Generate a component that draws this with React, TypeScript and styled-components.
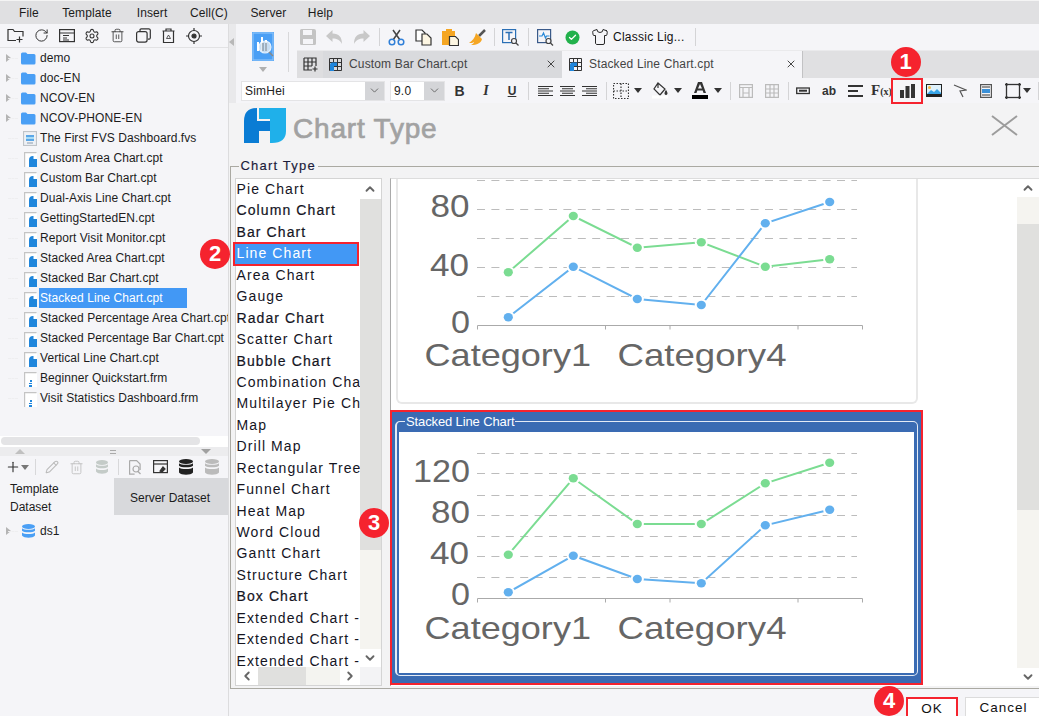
import React from "react";
import styled, { createGlobalStyle } from "styled-components";
import { ChevronUp, ChevronDown, ChevronLeft, ChevronRight, X, RotateCw, Settings, Trash2, Pencil, Plus, Shirt, Check } from "lucide-react";

const Global = createGlobalStyle`
  html, body { margin: 0; padding: 0; background: #f5f5f8; }
  * { box-sizing: border-box; }
`;

const Page = styled.div`
  width: 1039px; height: 716px; position: relative; overflow: hidden;
  display: flex; flex-direction: column;
  font-family: "Liberation Sans", Arial, sans-serif; font-size: 12px; color: #1c1c1c;
  background: #f5f5f8;
`;
const MenuBar = styled.div`
  height: 24px; flex: none; background: #e0e0e2; border-top: 1px solid #f4f4f4;
  display: flex; align-items: center; padding: 0 0 0 19px; letter-spacing: .1px;
`;
const MenuItem = styled.span<{ $after: number }>`margin-right: ${p => p.$after}px;`;
const Body = styled.div`flex: 1; min-height: 0; display: flex;`;

/* Sidebar */
const Sidebar = styled.aside`
  width: 229px; flex: none; display: flex; flex-direction: column;
  border-right: 1px solid #dcdcde; background: #f5f5f8;
`;
const SideTools = styled.div`
  height: 24px; flex: none; display: flex; align-items: center; padding-left: 3px;
  border-bottom: 1px solid #e2e2e4; color: #333;
`;
const SideTool = styled.span<{ $w?: number }>`
  width: ${p => p.$w ?? 25.5}px; flex: none; display: flex; align-items: center; justify-content: center;
`;
const Tree = styled.div`flex: 1; min-height: 0; overflow: hidden; position: relative; letter-spacing: .06px;`;
const TreeRow = styled.div`height: 20px; display: flex; align-items: center; white-space: nowrap; position: relative;`;
const Twisty = styled.span`
  width: 21px; flex: none; height: 20px; position: relative;
  &::after { content: ""; position: absolute; left: 8px; right: 3px; top: 10px; border-top: 1px dashed #eeeef0; }
`;
const Arrow = styled.i`
  position: absolute; left: 6px; top: 6px; width: 0; height: 0;
  border-left: 5px solid #b4b4b4; border-top: 4px solid transparent; border-bottom: 4px solid transparent;
`;
const TreeIcon = styled.span`
  width: 19px; flex: none; display: flex; height: 20px; align-items: center;
`;
const TreeLabel = styled.span<{ $on?: boolean }>`
  height: 20px; line-height: 20px; padding-left: 1px; margin-left: -1px;
  width: ${p => (p.$on ? "148px" : "auto")};
  background: ${p => (p.$on ? "#4298f5" : "transparent")};
  color: ${p => (p.$on ? "#fff" : "#1c1c1c")};
`;
const ScrollBand = styled.div`height: 11px; flex: none; background: #fff; padding: 1px 28px 2px 1px; display: flex;`;
const ScrollPill = styled.div`flex: 1; background: #e4e4e6; border-radius: 4px;`;
const Splitter = styled.div`
  height: 9px; flex: none; background: #ececee; display: flex; align-items: center; justify-content: space-between;
  padding: 0 17px 0 15px;
`;
const SplitUp = styled.i`width: 0; height: 0; border: 5px solid transparent; border-top: 0; border-bottom: 5px solid #c0c0c0;`;
const SplitDown = styled.i`width: 0; height: 0; border: 5px solid transparent; border-bottom: 0; border-top: 5px solid #a0a0a0;`;
const SplitGrip = styled.i`width: 6px; height: 4px; border-top: 1px solid #aaa; border-bottom: 1px solid #aaa;`;
const DataTools = styled.div`height: 22px; flex: none; display: flex; align-items: center; padding-left: 5px;`;
const SideSep = styled.i<{ $l: number; $r: number }>`
  width: 1px; height: 16px; background: #d8d8da; margin: 0 ${p => p.$r}px 0 ${p => p.$l}px; flex: none;
`;
const DataTabs = styled.div`height: 37px; flex: none; display: flex;`;
const DataTab = styled.div<{ $on?: boolean }>`
  width: 114px; display: flex; align-items: center; line-height: 18px; padding-top: 3px;
  padding-left: ${p => (p.$on ? "10px" : "16px")};
  background: ${p => (p.$on ? "#f5f5f8" : "#d8d9dc")};
`;
const DataTree = styled.div`height: 201px; flex: none; padding-top: 6px;`;

/* Right */
const Main = styled.main`flex: 1; min-width: 0; display: flex; flex-direction: column;`;
const Header = styled.header`height: 79px; flex: none; display: flex; position: relative; z-index: 1;`;
const Strip = styled.div`
  width: 7px; flex: none; background: #e9e9eb; display: flex; padding-top: 14px; align-items: flex-start;
  &::before { content: ""; border: 4px solid transparent; border-left: 0; border-right: 5px solid #b8b8b8; }
`;
const HeadCol = styled.div`flex: 1; min-width: 0; display: flex; flex-direction: column;`;
const HeadTop = styled.div`height: 54px; flex: none; display: flex;`;
const Rail = styled.div`
  width: 52px; flex: none; display: flex; flex-direction: column; align-items: center; padding-top: 8px; padding-left: 2px;
`;
const RailCaret = styled.i`
  margin-top: 6px; width: 0; height: 0; border: 4px solid transparent; border-bottom: 0; border-top: 5px solid #b0b0b0;
`;
const RailSep = styled.i`width: 1px; height: 40px; margin: 8px 8px 0 0; background: #d8d8da; flex: none;`;
const TopCol = styled.div`flex: 1; min-width: 0; display: flex; flex-direction: column;`;
const TopTools = styled.div`height: 26px; flex: none; display: flex; align-items: center; margin-left: -2px;`;
const ToolBtn = styled.span<{ $w?: number }>`
  width: ${p => p.$w ?? 26}px; height: 24px; flex: none; display: flex; align-items: center; justify-content: center;
  position: relative;
`;
const Sep = styled.i<{ $l: number; $r: number }>`
  width: 1px; height: 18px; flex: none; background: #d4d4d6; margin: 0 ${p => p.$r}px 0 ${p => p.$l}px;
`;
const ThemeLabel = styled.span`letter-spacing: .25px; white-space: nowrap; color: #111;`;
const TabRow = styled.div`height: 28px; flex: none; display: flex; background: #e0e0e2; border-top: 1px solid #eaeaec;`;
const NewTab = styled.div`width: 26px; flex: none; display: flex; align-items: center; justify-content: center; background: #dedee0;`;
const DocTab = styled.div<{ $on?: boolean }>`
  width: 240px; flex: none; display: flex; align-items: center; padding: 0 0 1px 6px; gap: 7px;
  background: ${p => (p.$on ? "#f5f5f8" : "#d9dadd")}; letter-spacing: .15px; color: #444;
  border-right: ${p => (p.$on ? "1px solid #c2c2c4" : "1px solid #f5f5f8")};
`;
const TabClose = styled.span`margin-left: auto; margin-right: 5px; display: flex; color: #333;`;
const FormatRow = styled.div`height: 25px; flex: none; display: flex; align-items: center; padding-left: 5px;`;
const Select = styled.div<{ $w: number; $btn: number }>`
  width: ${p => p.$w}px; height: 20px; flex: none; display: flex; background: #fff; border: 1px solid #e4e4e6;
  margin-right: ${p => (p.$w > 100 ? 5 : 1)}px; color: #222;
  & > span { flex: 1; padding-left: 3px; line-height: 18px; letter-spacing: .2px; }
  & > b { width: ${p => p.$btn}px; flex: none; background: #d4d5d8; display: flex; align-items: center; justify-content: center; color: #555; font-weight: 400; }
`;
const Glyph = styled.span<{ $serif?: boolean; $i?: boolean; $u?: boolean; $b?: boolean; $size?: number }>`
  font-family: ${p => (p.$serif ? '"Liberation Serif", serif' : '"Liberation Sans", sans-serif')};
  font-size: ${p => p.$size ?? 14}px;
  font-style: ${p => (p.$i ? "italic" : "normal")};
  font-weight: ${p => (p.$b ? 700 : 400)};
  text-decoration: ${p => (p.$u ? "underline" : "none")};
  color: #333;
`;
const SmallX = styled.span`font-size: 10px;`;
const Drop = styled.span<{ $gap: number; $mr: number; $ml?: number }>`
  display: flex; align-items: center; gap: ${p => p.$gap}px; flex: none;
  margin: 0 ${p => p.$mr}px 0 ${p => p.$ml ?? 0}px;
`;
const Caret = styled.i<{ $soft?: boolean }>`
  width: 0; height: 0; flex: none; border: 4px solid transparent; border-bottom: 0;
  border-top: 5px solid ${p => (p.$soft ? "#777" : "#333")};
`;
const Marked = styled(ToolBtn)`
  &::after { content: ""; position: absolute; left: -3px; right: -3px; top: -1px; bottom: -1px; border: 2px solid #f5232e; }
`;
const OverlayCheck = styled.span`position: absolute; display: flex; color: #fff;`;
const DbOffset = styled.span`margin-left: 1px; display: flex;`;

/* Dialog */
const Dialog = styled.section`flex: 1; min-height: 0; display: flex; flex-direction: column; background: #f3f3f4;`;
const DialogHead = styled.div`
  height: 55px; flex: none; display: flex; align-items: flex-start; padding: 5px 21px 0 15px;
`;
const DialogTitle = styled.h1`
  margin: 4px 0 0 7px; font-size: 28px; line-height: 34px; font-weight: 400; color: #a2a2a2; letter-spacing: .8px;
  -webkit-text-stroke: .7px #a2a2a2;
`;
const DialogClose = styled.span`margin: 7px 0 0 auto; display: flex;`;
const TypeField = styled.fieldset`
  margin: 0 0 0 1px; padding: 4px 0 0 3.5px; height: 531px; flex: none; display: flex; gap: 8.5px;
  border: 1px solid #aaa9a2; border-right: 0; min-width: 0;
`;
const TypeLegend = styled.legend`
  margin-left: 4px; padding: 0 2px; font-size: 13px; line-height: 16px; letter-spacing: 1.2px; color: #1b1b3a;
  -webkit-text-stroke: .15px #1b1b3a;
`;
const ListBox = styled.div`
  width: 147px; height: 508px; flex: none; border: 1px solid #d4d4d4; background: #fff;
  display: grid; grid-template-columns: 124px 21px; grid-template-rows: minmax(0, 1fr) 18px;
`;
const Rows = styled.div`min-height: 0;`;
const TypeRow = styled.div<{ $on?: boolean; $heavy?: boolean }>`
  height: 21.45px; line-height: 21.45px; white-space: nowrap; overflow: hidden;
  font-size: 14px; letter-spacing: 1.1px; padding-left: ${p => (p.$on ? "3px" : "1px")};
  margin: ${p => (p.$on ? "0 2px 0 -2px" : "0")};
  color: ${p => (p.$on ? "#fff" : "#15151f")};
  background: ${p => (p.$on ? "#4298f5" : "transparent")};
  outline: ${p => (p.$on ? "2px solid #f5232e" : "none")}; outline-offset: -1px;
  position: relative; z-index: ${p => (p.$on ? 2 : 0)};
  -webkit-text-stroke: ${p => (p.$heavy ? ".2px #15151f" : "0")};
`;
const VBar = styled.div`display: flex; flex-direction: column; background: #f5f4f0; position: relative; z-index: 1;`;
const HBar = styled.div`display: flex; background: #f4f4f0; position: relative; z-index: 1;`;
const Corner = styled.div`background: #f3f3f5;`;
const ScrollBtn = styled.span<{ $h?: number; $w?: number }>`
  flex: none; background: #fff; display: flex; align-items: center; justify-content: center; color: #666;
  height: ${p => (p.$h ? `${p.$h}px` : "auto")}; width: ${p => (p.$w ? `${p.$w}px` : "auto")};
`;
const Thumb = styled.div<{ $len: number; $horizontal?: boolean }>`
  flex: none; background: #e0e0de;
  ${p => (p.$horizontal ? `width: ${p.$len}px;` : `height: ${p.$len}px;`)}
`;
const Flex1 = styled.div`flex: 1;`;
const TrackGap = styled.div`flex: 0 0 27px;`;
const Pane = styled.div`
  flex: 1; min-width: 0; height: 508px; display: flex; border-left: 1px solid #aaa; border-top: 1px solid #ddd; background: #fff;
`;
const Cards = styled.div`flex: 1; min-width: 0; display: flex; flex-direction: column;`;
const PlainCard = styled.div`
  width: 522px; height: 225px; flex: none; margin-left: 5px; border: 2px solid #e8e8e8; border-top: 0; border-radius: 0 0 6px 6px;
`;
const SelectedCard = styled.div`
  width: 533px; height: 275px; flex: none; margin: 6px 0 0 -1px; padding: 2px 3px 0; position: relative;
  border: 2px solid #f5232e; background: #3a6bb3;
`;
const InnerField = styled.fieldset`
  margin: 0; padding: 3px 3px 2px 2px; min-width: 0; border-style: solid; border-color: #e4ebf5; border-width: 1px 1px 1px 2px; border-radius: 5px;
`;
const InnerLegend = styled.legend`
  margin-left: 6px; padding: 0 1px; font-size: 13px; line-height: 15px; letter-spacing: -.12px; color: #fff;
`;
const InnerPanel = styled.div`height: 241px; background: #fff;`;
const ChartSvg = styled.svg`display: block;`;
const AxisText = styled.text`font-family: "Liberation Sans", Arial, sans-serif; font-size: 32px; fill: #666;`;
const PaneBar = styled.div`
  width: 22px; flex: none; margin-left: 1px; display: flex; flex-direction: column; background: #f5f4f0;
`;
const Footer = styled.div`
  flex: 1; min-height: 0; display: flex; justify-content: flex-end; gap: 7px; padding-top: 8px; margin-right: -3px;
  background: #f5f5f8; overflow: hidden;
`;
const DlgButton = styled.div<{ $w: number; $on?: boolean }>`
  width: ${p => p.$w}px; height: 24px; flex: none; background: #fff; text-align: center;
  font-size: 13.5px; line-height: 19px; letter-spacing: 1px; color: #111;
  border: ${p => (p.$on ? "2px solid #f5232e" : "1px solid #dcdcdc")};
`;

const Badge = styled.div<{ $x: number; $y: number }>`
  position: absolute; left: ${p => p.$x - 15}px; top: ${p => p.$y - 15}px; width: 30px; height: 30px; border-radius: 50%;
  background: #f5232e; color: #fff; font-size: 22px; font-weight: 700; line-height: 30px; text-align: center; z-index: 5;
`;

/* --- icons --- */
const S = (p: React.SVGProps<SVGSVGElement> & { w?: number; h?: number }) => {
  const { w = 16, h = 16, children, ...r } = p;
  return <svg width={w} height={h} viewBox={`0 0 ${w} ${h}`} fill="none" stroke="#333" strokeWidth={1.2} {...r}>{children}</svg>;
};
const FileSvg = styled(S)`margin: 3px 0 0 3px;`;
const FvsSvg = styled(S)`margin-left: 2px;`;
const LogoSvg = styled(S)`flex: none;`;
const Folder = () => (
  <S w={15} h={13} stroke="none"><path d="M0 2a1.5 1.5 0 0 1 1.5-1.5H5L6.5 2H13a1.5 1.5 0 0 1 1.5 1.5V11A1.5 1.5 0 0 1 13 12.5H1.5A1.5 1.5 0 0 1 0 11z" fill="#4a9ff5" /></S>
);
const CptIcon = () => (
  <FileSvg w={13} h={15} stroke="none">
    <path d="M1 1h12v14H1z" fill="#fff" />
    <path d="M.6 15V.6H12.500" stroke="#c4c4c4" />
    <path d="M5 15V8a4 4 0 0 1 4-4h.5v3H13v8z" fill="#1f86dc" />
  </FileSvg>
);
const FrmIcon = () => (
  <FileSvg w={13} h={15} stroke="none">
    <path d="M1 1h12v14H1z" fill="#fff" />
    <path d="M.6 15V.6H12.500" stroke="#c4c4c4" />
    <path d="M6 8h2v2H6zM5 11h3v1H5zM5 13h3v2H5z" fill="#1f86dc" />
  </FileSvg>
);
const FvsIcon = () => (
  <FvsSvg w={14} h={15} stroke="none">
    <rect x=".5" y=".5" width="13" height="14" fill="#eef1f5" stroke="#c0c4c8" />
    <rect x="3" y="4" width="8" height="6" fill="#5aa7e8" />
    <path d="M3 7h8" stroke="#dff" />
    <path d="M4 12h6" stroke="#9ab" />
  </FvsSvg>
);
const Db = ({ c = "#4a9ff5", w = 13, h = 14 }: { c?: string; w?: number; h?: number }) => (
  <S w={w} h={h} stroke="none">
    <ellipse cx={w / 2} cy="2.5" rx={w / 2} ry="2.5" fill={c} />
    <path d={`M0 4.2c2 2 ${w - 2} 2 ${w} 0v2.5c-2 2-${w - 2} 2-${w} 0z`} fill={c} />
    <path d={`M0 8.4c2 2 ${w - 2} 2 ${w} 0V${h - 2.4}c-2 3-${w - 2} 3-${w} 0z`} fill={c} />
  </S>
);
const GridTab = () => (
  <S w={13} h={13} strokeWidth={1}>
    <path d="M.5.5h12v12H.5zM.5 4.500h12M.5 8.500h12M4.500.5v12M8.500.5v12" stroke="#333" />
    <path d="M1 13V7a2.500 2.500 0 0 1 2.500-2.500H5V13z" fill="#1f86dc" stroke="none" />
    <path d="M5 4.500h3v3.500H5z" fill="#1f86dc" stroke="none" />
  </S>
);
const Lines = ({ mode }: { mode: "l" | "c" | "r" }) => {
  const xs = (len: number) => (mode === "l" ? 0 : mode === "c" ? (15 - len) / 2 : 15 - len);
  const ls = [15, 11, 15, 11, 15];
  return (
    <S w={15} h={12} strokeWidth={1}>
      {ls.map((l, i) => <path key={i} d={`M${xs(l)} ${1.5 + i * 2.25}h${l}`} />)}
    </S>
  );
};
const Bars = () => (
  <S w={15} h={15} stroke="none"><path d="M0 7h4v8H0zM5.5 3h4v12h-4zM11 1h4v14h-4z" fill="#333" /></S>
);
const BigChart = () => (
  <S w={22} h={29} stroke="none">
    <rect width="22" height="29" fill="#4a9ff5" />
    <rect x="1" y="1" width="20" height="27" fill="none" stroke="#8cc3f8" />
    <path d="M5 10h2v9H5zM9 5h2v14H9zM13 8h2v11h-2z" fill="#fff" />
    <circle cx="13" cy="15" r="6" fill="#dfe9f3" stroke="#fff" opacity=".85" />
    <path d="M11 11v8M14 11v8" stroke="#7a8a9a" />
    <path d="M17 20l4 4" stroke="#888" strokeWidth="1.5" />
  </S>
);
const Logo = () => (
  <LogoSvg w={42} h={35} stroke="none">
    <path d="M0 35V13Q0 0 13 0V13H26V23H15V35Z" fill="#0a7cd4" />
    <path d="M15 0H42V23Q42 35 28 35H26V11H15Z" fill="#1fb0ea" />
  </LogoSvg>
);

/* --- chart --- */
type Pt = [number, number];
type ChartProps = {
  box: [number, number, number, number]; grid: number[]; axis: number; cat: number;
  labels: [string, number, number, number][]; green: Pt[]; blue: Pt[];
};
const Series = ({ pts, c }: { pts: Pt[]; c: string }) => (
  <>
    <polyline points={pts.map(p => p.join(",")).join(" ")} fill="none" stroke={c} strokeWidth={2} />
    {pts.map((p, i) => <ellipse key={i} cx={p[0]} cy={p[1]} rx={4.6} ry={4.2} fill={c} stroke="#fff" strokeWidth={4} paintOrder="stroke" />)}
  </>
);
const Chart = ({ box, grid, axis, cat, labels, green, blue }: ChartProps) => (
  <ChartSvg width={box[2]} height={box[3]} viewBox={box.join(" ")}>
    {grid.map(y => <path key={y} d={`M477 ${y}H857`} stroke="#bcbcbc" strokeDasharray="8 6.4" />)}
    <path d={`M477.5 ${axis + 4}V${axis}H862.5V${axis + 4}M605.5 ${axis}v4M670 ${axis}v4M798 ${axis}v4`} stroke="#aaa" fill="none" />
    {labels.map(([t, x, y, l]) => <AxisText key={t} x={x} y={y} textLength={l} lengthAdjust="spacingAndGlyphs">{t}</AxisText>)}
    <AxisText x={424.5} y={cat} textLength={166.5} lengthAdjust="spacingAndGlyphs">Category1</AxisText>
    <AxisText x={617.5} y={cat} textLength={169} lengthAdjust="spacingAndGlyphs">Category4</AxisText>
    <Series pts={green} c="#7bdc92" />
    <Series pts={blue} c="#62b0ee" />
  </ChartSvg>
);

const menu: [string, number][] = [["File", 23.5], ["Template", 25], ["Insert", 22.5], ["Cell(C)", 22.5], ["Server", 21.5], ["Help", 0]];
const files: [string, "fvs" | "cpt" | "frm", boolean?][] = [
  ["The First FVS Dashboard.fvs", "fvs"], ["Custom Area Chart.cpt", "cpt"], ["Custom Bar Chart.cpt", "cpt"],
  ["Dual-Axis Line Chart.cpt", "cpt"], ["GettingStartedEN.cpt", "cpt"], ["Report Visit Monitor.cpt", "cpt"],
  ["Stacked Area Chart.cpt", "cpt"], ["Stacked Bar Chart.cpt", "cpt"], ["Stacked Line Chart.cpt", "cpt", true],
  ["Stacked Percentage Area Chart.cpt", "cpt"], ["Stacked Percentage Bar Chart.cpt", "cpt"], ["Vertical Line Chart.cpt", "cpt"],
  ["Beginner Quickstart.frm", "frm"], ["Visit Statistics Dashboard.frm", "frm"],
];
const types = ["Pie Chart", "Column Chart", "Bar Chart", "Line Chart", "Area Chart", "Gauge", "Radar Chart", "Scatter Chart", "Bubble Chart", "Combination Chart", "Multilayer Pie Chart", "Map", "Drill Map", "Rectangular Tree", "Funnel Chart", "Heat Map", "Word Cloud", "Gantt Chart", "Structure Chart", "Box Chart", "Extended Chart - 1", "Extended Chart - 2", "Extended Chart - 3"];
const heavy = new Set(["Column Chart", "Bar Chart", "Radar Chart", "Bubble Chart", "Box Chart"]);

export default function App() {
  return (
    <Page>
      <Global />
      <MenuBar>
        {menu.map(([m, a]) => <MenuItem key={m} $after={a}>{m}</MenuItem>)}
      </MenuBar>
      <Body>
        <Sidebar>
          <SideTools>
            <SideTool><S w={17} h={15}><path d="M9 12.5H1V1.5h5l1.5 2H16v5" /><path d="M12.5 8.5v6M9.5 11.5h6" /></S></SideTool>
            <SideTool><RotateCw size={15} strokeWidth={1.6} /></SideTool>
            <SideTool><S w={16} h={15}><rect x=".6" y="1.6" width="14.8" height="12" /><path d="M1 5h14M4 7.5h6M4 10h4M4 12h6" /></S></SideTool>
            <SideTool><Settings size={16} strokeWidth={1.6} /></SideTool>
            <SideTool><Trash2 size={15} strokeWidth={1.3} /></SideTool>
            <SideTool><S w={15} h={15}><rect x=".6" y="3.6" width="10.5" height="10.5" rx="2" /><path d="M4 3V2a1.2 1.2 0 0 1 1.2-1.2h7.6A1.5 1.5 0 0 1 14.3 2v8a1.5 1.5 0 0 1-1.2 1.2H12" /></S></SideTool>
            <SideTool><S w={13} h={15}><path d="M.5 3h12M4 3V1h5v2M1.5 3v11.5h10V3" /><path d="M4.5 10.5l2-3.5 2 3.5z" strokeWidth=".8" /></S></SideTool>
            <SideTool><S w={16} h={16}><circle cx="8" cy="8" r="5.5" /><circle cx="8" cy="8" r="2" fill="#333" /><path d="M8 0v2.5M8 13.5V16M0 8h2.5M13.5 8H16" /></S></SideTool>
          </SideTools>
          <Tree>
            {["demo", "doc-EN", "NCOV-EN", "NCOV-PHONE-EN"].map(n => (
              <TreeRow key={n}><Twisty><Arrow /></Twisty><TreeIcon><Folder /></TreeIcon><TreeLabel>{n}</TreeLabel></TreeRow>
            ))}
            {files.map(([n, k, on]) => (
              <TreeRow key={n}>
                <Twisty />
                <TreeIcon>{k === "fvs" ? <FvsIcon /> : k === "cpt" ? <CptIcon /> : <FrmIcon />}</TreeIcon>
                <TreeLabel $on={on}>{n}</TreeLabel>
              </TreeRow>
            ))}
          </Tree>
          <ScrollBand><ScrollPill /></ScrollBand>
          <Splitter><SplitUp /><SplitGrip /><SplitDown /></Splitter>
          <DataTools>
            <Plus size={20} strokeWidth={1.7} color="#333" />
            <Caret $soft />
            <SideSep $l={6} $r={5} />
            <SideTool $w={22}><Pencil size={14} color="#bbb" strokeWidth={1.8} /></SideTool>
            <SideTool $w={27}><Trash2 size={15} color="#bbb" strokeWidth={1.3} /></SideTool>
            <SideTool $w={24}><Db c="#c4cbc8" w={12} h={14} /></SideTool>
            <SideSep $l={4} $r={7} />
            <SideTool $w={18}><S w={12} h={15} stroke="#aaa"><path d="M.6.6h7l3.5 3.5v6M.6.6v13.5h5" /><circle cx="7" cy="9" r="3" /><path d="M9 11.5l2.5 2.5" /></S></SideTool>
            <SideTool $w={32}><S w={15} h={14}><rect x=".6" y=".6" width="13.8" height="12" /><path d="M1 4h13" /><path d="M7 11l3-4 2 2-3 3z" fill="#333" /></S></SideTool>
            <SideTool $w={19}><Db c="#222" w={14} h={16} /></SideTool>
            <SideTool $w={33}><Db c="#bbb" w={14} h={16} /></SideTool>
          </DataTools>
          <DataTabs>
            <DataTab $on>Template<br />Dataset</DataTab>
            <DataTab>Server Dataset</DataTab>
          </DataTabs>
          <DataTree>
            <TreeRow><Twisty><Arrow /></Twisty><TreeIcon><DbOffset><Db /></DbOffset></TreeIcon><TreeLabel>ds1</TreeLabel></TreeRow>
          </DataTree>
        </Sidebar>
        <Main>
          <Header>
            <Strip />
            <HeadCol>
              <HeadTop>
                <Rail><BigChart /><RailCaret /></Rail>
                <RailSep />
                <TopCol>
                  <TopTools>
                    <ToolBtn><S w={16} h={16} stroke="none"><path d="M0 1.5A1.5 1.5 0 0 1 1.5 0H14a2 2 0 0 1 2 2v12.5a1.5 1.5 0 0 1-1.5 1.5h-13A1.5 1.5 0 0 1 0 14.5z" fill="#c4c4c4" /><path d="M3 1h9v5H3zM3 10h10v5H3z" fill="#f5f5f8" /></S></ToolBtn>
                    <ToolBtn $w={27}><S w={17} h={14} stroke="none"><path d="M6.5 0v3.5C13 3.5 16 7 16 14c-2-4-5-5.5-9.500-5.500V12L0 6z" fill="#c8c8c8" /></S></ToolBtn>
                    <ToolBtn $w={27}><S w={17} h={14} stroke="none"><path d="M10.500 0v3.500C4 3.500 1 7 1 14c2-4 5-5.500 9.500-5.500V12L17 6z" fill="#c8c8c8" /></S></ToolBtn>
                    <Sep $l={4} $r={3} />
                    <ToolBtn $w={27}><S w={17} h={17}><path d="M5 11L12 1M12 11L5 1" stroke="#444" strokeWidth="1.5" /><circle cx="4" cy="13" r="2.800" stroke="#2f7fd8" strokeWidth="1.500" /><circle cx="13" cy="13" r="2.800" stroke="#2f7fd8" strokeWidth="1.500" /></S></ToolBtn>
                    <ToolBtn $w={27}><S w={17} h={17}><path d="M1 1h6l3 3v8H1z" fill="#fff" /><path d="M7 5h5l4 4v7H7z" fill="#fdf6e3" /></S></ToolBtn>
                    <ToolBtn $w={27}><S w={17} h={17} stroke="none"><path d="M0 2h4V0h6v2h3v6H7v8H0z" fill="#f5a623" /><path d="M7.500 7.500h6l3 3v6h-9z" fill="#fdf6e3" stroke="#333" /></S></ToolBtn>
                    <ToolBtn $w={27}><S w={17} h={17} stroke="none"><path d="M10 7l3-3 3-3" stroke="#555" strokeWidth="2.500" /><path d="M7 4l6 6c-1 4-5 6-11 6 2-1 3-2 3-3-1 1-3 1-5 1 3-2 6-5 7-10z" fill="#f5a623" /></S></ToolBtn>
                    <Sep $l={3} $r={2} />
                    <ToolBtn $w={27}><S w={17} h={17} stroke="#2a6fb5"><rect x=".6" y=".6" width="13" height="13" /><path d="M3.500 3.500h7M7 3.500V11" strokeWidth="1.500" /><circle cx="12" cy="12" r="2.500" stroke="#444" fill="#f5f5f8" /><path d="M14 14l2.500 2.500" stroke="#444" /></S></ToolBtn>
                    <Sep $l={4} $r={3} />
                    <ToolBtn $w={27}><S w={17} h={17} stroke="#3a5a8a"><rect x=".6" y=".6" width="13" height="13" /><path d="M2 7h3l1.500-3 2 5 1-2h3" stroke="#2a8ad8" /><circle cx="11.500" cy="12" r="2.500" stroke="#444" fill="#f5f5f8" /><path d="M13.500 14l2.500 2.500" stroke="#444" /></S></ToolBtn>
                    <ToolBtn $w={27}><S w={15} h={15} stroke="none"><circle cx="7.500" cy="7.500" r="7" fill="#22b14c" /></S><OverlayCheck><Check size={9} strokeWidth={3.5} /></OverlayCheck></ToolBtn>
                    <ToolBtn $w={27}><Shirt size={18} strokeWidth={1.3} color="#222" /></ToolBtn>
                    <ThemeLabel>Classic Lig...</ThemeLabel>
                    <Sep $l={10} $r={0} />
                  </TopTools>
                  <TabRow>
                    <NewTab><S w={15} h={15}><path d="M1 1h12v8M1 1v12h8M1 5h12M1 9h8M5 1v12M9 1v8M12 9.500v5M9.500 12h5" /></S></NewTab>
                    <DocTab><GridTab />Custom Bar Chart.cpt<TabClose><X size={12} strokeWidth={1.8} /></TabClose></DocTab>
                    <DocTab $on><GridTab />Stacked Line Chart.cpt<TabClose><X size={12} strokeWidth={1.8} /></TabClose></DocTab>
                  </TabRow>
                </TopCol>
              </HeadTop>
              <FormatRow>
                <Select $w={144} $btn={19}><span>SimHei</span><b><ChevronDown size={13} strokeWidth={1.5} /></b></Select>
                <Select $w={55} $btn={20}><span>9.0</span><b><ChevronDown size={13} strokeWidth={1.5} /></b></Select>
                <ToolBtn $w={27}><Glyph $b>B</Glyph></ToolBtn>
                <ToolBtn><Glyph $serif $i $b>I</Glyph></ToolBtn>
                <ToolBtn><Glyph $b $u $size={12}>U</Glyph></ToolBtn>
                <Sep $l={3} $r={5} />
                <ToolBtn $w={22}><Lines mode="l" /></ToolBtn>
                <ToolBtn $w={22}><Lines mode="c" /></ToolBtn>
                <ToolBtn $w={22}><Lines mode="r" /></ToolBtn>
                <Sep $l={6} $r={6} />
                <Drop $gap={5} $mr={10}>
                  <S w={16} h={16} strokeDasharray="1.5 1.5"><path d="M.5.5h15v15H.5zM8 .5v15M.5 8h15" /></S><Caret />
                </Drop>
                <Drop $gap={6} $mr={10}>
                  <S w={16} h={17}><path d="M6 1l7 6-5 6-6-6zM6 1v5" /><path d="M14 9c1 2 1.500 3 0 3.500-1.500-.5-1-1.500 0-3.500z" fill="#333" /><path d="M0 15h16" stroke="#fff" strokeWidth="3" /></S><Caret />
                </Drop>
                <Drop $gap={6} $mr={8}>
                  <S w={16} h={17} stroke="none"><path d="M6 0h4l4 11h-2.500l-.8-2.500H5.300L4.500 11H2zM6 6.500h4L8 2z" fill="#333" fillRule="evenodd" /><path d="M0 13h16v4H0z" fill="#000" /></S><Caret />
                </Drop>
                <Sep $l={0} $r={2} />
                <ToolBtn><S w={14} h={14} stroke="#bbb"><rect x=".6" y=".6" width="12.800" height="12.800" /><path d="M1 3.500h12M4 3.500V13M10 3.500V13M4 9h6" /></S></ToolBtn>
                <ToolBtn><S w={14} h={14} stroke="#bbb"><path d="M.6.6h12.800v12.800H.6zM.6 5h12.800M.6 9h12.800M5 .6v12.800M9 .6v12.800" /></S></ToolBtn>
                <Sep $l={3} $r={1} />
                <ToolBtn><S w={14} h={8} strokeWidth={1.300}><rect x=".7" y="1" width="12.600" height="5.500" /><path d="M3 3.700h8" strokeWidth="2" /></S></ToolBtn>
                <ToolBtn><Glyph $b $size={12}>ab</Glyph></ToolBtn>
                <ToolBtn $w={27}><S w={15} h={14} strokeWidth={2}><path d="M0 2h15M0 7h10M0 12h15" /></S></ToolBtn>
                <ToolBtn $w={25}><Glyph $serif $b $size={15}>F<SmallX>(x)</SmallX></Glyph></ToolBtn>
                <Marked><Bars /></Marked>
                <ToolBtn $w={27}><S w={16} h={13} stroke="none"><rect width="16" height="13" fill="#222" /><rect x="1" y="1" width="14" height="9" fill="#dff1fb" /><circle cx="3.500" cy="3.500" r="1.500" fill="#f5b942" /><path d="M1 10l4-4 3 2 3-3 4 4v1H1z" fill="#38a5e8" /></S></ToolBtn>
                <ToolBtn><S w={14} h={14} stroke="#555"><path d="M1 1l12 5-6 1 3 6" /></S></ToolBtn>
                <ToolBtn><S w={12} h={14} stroke="#555"><rect x=".6" y=".6" width="10.800" height="12.800" /><path d="M2 3h8" stroke="#555" /><path d="M2 5h8v4H2z" fill="#3a90d8" stroke="none" /><path d="M2 11h8" stroke="#555" /></S></ToolBtn>
                <Drop $gap={2} $mr={0} $ml={6}>
                  <S w={16} h={16} strokeWidth={1.300}><rect x="1.500" y="1.500" width="13" height="13" /><path d="M0 1.500h3M1.500 0v3M13 1.500h3M14.500 0v3M0 14.500h3M1.500 13v3M13 14.500h3M14.500 13v3" /></S><Caret />
                </Drop>
                <Sep $l={7} $r={0} />
              </FormatRow>
            </HeadCol>
          </Header>
          <Dialog>
            <DialogHead>
              <Logo />
              <DialogTitle>Chart Type</DialogTitle>
              <DialogClose><S w={27} h={21} stroke="#9c9c9c" strokeWidth={2}><path d="M1 1l25 19M26 1L1 20" /></S></DialogClose>
            </DialogHead>
            <TypeField>
              <TypeLegend>Chart Type</TypeLegend>
              <ListBox>
                <Rows>
                  {types.map(t => <TypeRow key={t} $on={t === "Line Chart"} $heavy={heavy.has(t)}>{t}</TypeRow>)}
                </Rows>
                <VBar>
                  <ScrollBtn $h={20}><ChevronUp size={14} strokeWidth={3.2} /></ScrollBtn>
                  <Thumb $len={351} />
                  <Flex1 />
                  <ScrollBtn $h={18}><ChevronDown size={14} strokeWidth={3.2} /></ScrollBtn>
                </VBar>
                <HBar>
                  <ScrollBtn $w={22}><ChevronLeft size={14} strokeWidth={3.2} /></ScrollBtn>
                  <Thumb $len={48} $horizontal />
                  <Flex1 />
                  <ScrollBtn $w={20}><ChevronRight size={14} strokeWidth={3.2} /></ScrollBtn>
                </HBar>
                <Corner />
              </ListBox>
              <Pane>
                <Cards>
                  <PlainCard>
                    <Chart
                      box={[398, 179, 518, 223]}
                      grid={[180.5, 209.5, 238.5, 267.5, 296.5]} axis={325.5} cat={365.5}
                      labels={[["80", 430.5, 216.5, 39], ["40", 430, 275.5, 39], ["0", 451, 332.5, 19]]}
                      green={[[508.3, 272.3], [573.3, 216], [637.3, 247.7], [701.3, 242.3], [765.3, 266.7], [829.7, 259.3]]}
                      blue={[[508.3, 317.3], [573.3, 266.7], [637.3, 299], [701.3, 305], [765.3, 223.3], [829.7, 202]]}
                    />
                  </PlainCard>
                  <SelectedCard>
                    <InnerField>
                      <InnerLegend>Stacked Line Chart</InnerLegend>
                      <InnerPanel>
                        <Chart
                          box={[399, 433, 515, 241]}
                          grid={[454.5, 474.5, 496.5, 516.5, 537.5, 557.5, 578.5]} axis={599.5} cat={639.5}
                          labels={[["120", 413, 482.5, 57], ["80", 431, 523.5, 39], ["40", 430, 565, 39], ["0", 451, 606, 19]]}
                          green={[[508.3, 555.7], [573.3, 479.3], [637.3, 525], [701.3, 525], [765.3, 484.3], [829.7, 463.7]]}
                          blue={[[508.3, 593.3], [573.3, 556.7], [637.3, 580], [701.3, 584.3], [765.3, 526.3], [829.7, 510.7]]}
                        />
                      </InnerPanel>
                    </InnerField>
                  </SelectedCard>
                </Cards>
                <PaneBar>
                  <ScrollBtn $h={18}><ChevronUp size={14} strokeWidth={3.2} /></ScrollBtn>
                  <TrackGap />
                  <Thumb $len={286} />
                  <Flex1 />
                  <ScrollBtn $h={18}><ChevronDown size={14} strokeWidth={3.2} /></ScrollBtn>
                </PaneBar>
              </Pane>
            </TypeField>
            <Footer>
              <DlgButton $w={52} $on>OK</DlgButton>
              <DlgButton $w={77}>Cancel</DlgButton>
            </Footer>
          </Dialog>
        </Main>
      </Body>
      <Badge $x={905.5} $y={61.5}>1</Badge>
      <Badge $x={215} $y={254}>2</Badge>
      <Badge $x={374} $y={523}>3</Badge>
      <Badge $x={889} $y={701}>4</Badge>
    </Page>
  );
}
